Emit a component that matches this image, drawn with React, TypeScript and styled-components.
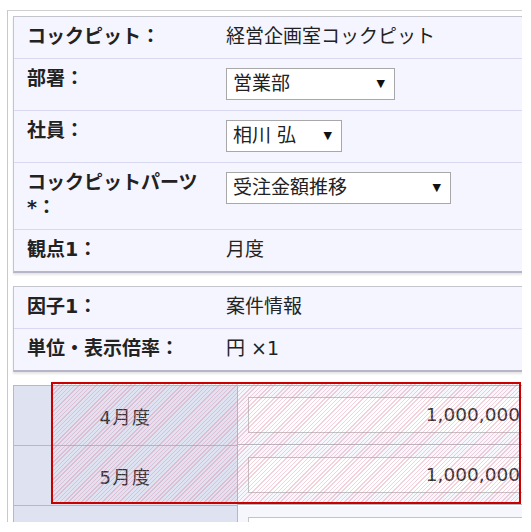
import React from "react";
import styled, { createGlobalStyle } from "styled-components";

const Global = createGlobalStyle`
  html, body { margin: 0; padding: 0; background: #fff; }
  body {
    font-family: "DejaVu Sans", "Noto Sans CJK JP", sans-serif;
    color: #222;
  }
`;

const Viewport = styled.div`
  width: 522px;
  height: 522px;
  overflow: hidden;
  box-sizing: border-box;
  padding: 10px 0 0 7px;
`;

const Frame = styled.div`
  width: 580px;
  min-height: 600px;
  border-top: 1px solid #d0d0d0;
  border-left: 1px solid #c8c8c8;
  padding: 5px 0 0 5px;
  display: flex;
  flex-direction: column;
  gap: 13px;
`;

const Panel = styled.div`
  width: 540px;
  background: #f5f5ff;
  border: 1px solid #c4c4cc;
  border-bottom: 2px solid #b6b6c8;
  box-shadow: 0 2px 2px rgba(0, 0, 0, 0.1);
`;

const Row = styled.div`
  display: grid;
  grid-template-columns: 212px 1fr;
  padding: 7px 0 9px;
  border-bottom: 1px solid #d8d8f0;
  &:last-child { border-bottom: none; }
`;

const Label = styled.div`
  padding: 0 14px 0 13px;
  font-weight: bold;
  font-size: 19px;
  line-height: 25px;
  color: #222;
`;

const Value = styled.div`
  font-size: 19px;
  line-height: 25px;
  color: #222;
`;

const Select = styled.div<{ $w: number }>`
  width: ${(p) => p.$w}px;
  height: 32px;
  box-sizing: border-box;
  margin: 2px 0 1px;
  border: 1px solid #a8a8a8;
  background: #fff;
  display: flex;
  align-items: center;
  justify-content: space-between;
  padding: 0 9px 2px 6px;
  font-size: 19px;
  line-height: 25px;
`;

const Arrow = styled.span`
  font-size: 11px;
  color: #111;
`;

const TableWrap = styled.div`
  position: relative;
`;

const Table = styled.div`
  width: 524px;
  display: grid;
  grid-template-columns: 224px 1fr;
  border-top: 1px solid #b8b8c0;
  border-left: 1px solid #b8b8c0;
`;

const HeadCell = styled.div`
  height: 59px;
  background: #dfe2f1;
  border-right: 1px solid #b8b8c0;
  border-bottom: 1px solid #b8b8c0;
  display: flex;
  align-items: center;
  justify-content: center;
  font-size: 18px;
  color: #333;
  letter-spacing: 1.5px;
`;

const DataCell = styled.div`
  height: 59px;
  box-sizing: border-box;
  background: #f6f6fd;
  border-bottom: 1px solid #b8b8c0;
  padding: 11px 10px 0 10px;
`;

const Input = styled.div`
  height: 36px;
  box-sizing: border-box;
  border: 1px solid #c4c4c4;
  background: #fff;
  text-align: right;
  padding-right: 7px;
  font-size: 18.5px;
  line-height: 34px;
  color: #333;
  white-space: nowrap;
`;

const Highlight = styled.div`
  position: absolute;
  top: -3px;
  left: 38px;
  width: 470px;
  height: 122px;
  box-sizing: border-box;
  border: 2px solid #c80000;
  background: repeating-linear-gradient(
    -45deg,
    rgba(222, 120, 150, 0.34) 0px,
    rgba(222, 120, 150, 0.34) 1px,
    transparent 1px,
    transparent 3px
  );
  pointer-events: none;
`;

const months = [
  { label: "4月度", value: "1,000,000" },
  { label: "5月度", value: "1,000,000" },
  { label: "", value: "" },
];

export default function App() {
  return (
    <>
      <Global />
      <Viewport>
        <Frame>
          <Panel>
            <Row>
              <Label>コックピット：</Label>
              <Value>経営企画室コックピット</Value>
            </Row>
            <Row>
              <Label>部署：</Label>
              <Value>
                <Select $w={169}>
                  <span>営業部</span>
                  <Arrow>▼</Arrow>
                </Select>
              </Value>
            </Row>
            <Row>
              <Label>社員：</Label>
              <Value>
                <Select $w={116}>
                  <span>相川 弘</span>
                  <Arrow>▼</Arrow>
                </Select>
              </Value>
            </Row>
            <Row>
              <Label>コックピットパーツ*：</Label>
              <Value>
                <Select $w={225}>
                  <span>受注金額推移</span>
                  <Arrow>▼</Arrow>
                </Select>
              </Value>
            </Row>
            <Row>
              <Label>観点1：</Label>
              <Value>月度</Value>
            </Row>
          </Panel>
          <Panel>
            <Row>
              <Label>因子1：</Label>
              <Value>案件情報</Value>
            </Row>
            <Row>
              <Label>単位・表示倍率：</Label>
              <Value>円 ×1</Value>
            </Row>
          </Panel>
          <TableWrap>
            <Table>
              {months.map((m, i) => (
                <React.Fragment key={i}>
                  <HeadCell>{m.label}</HeadCell>
                  <DataCell>
                    <Input>{m.value}</Input>
                  </DataCell>
                </React.Fragment>
              ))}
            </Table>
            <Highlight />
          </TableWrap>
        </Frame>
      </Viewport>
    </>
  );
}
